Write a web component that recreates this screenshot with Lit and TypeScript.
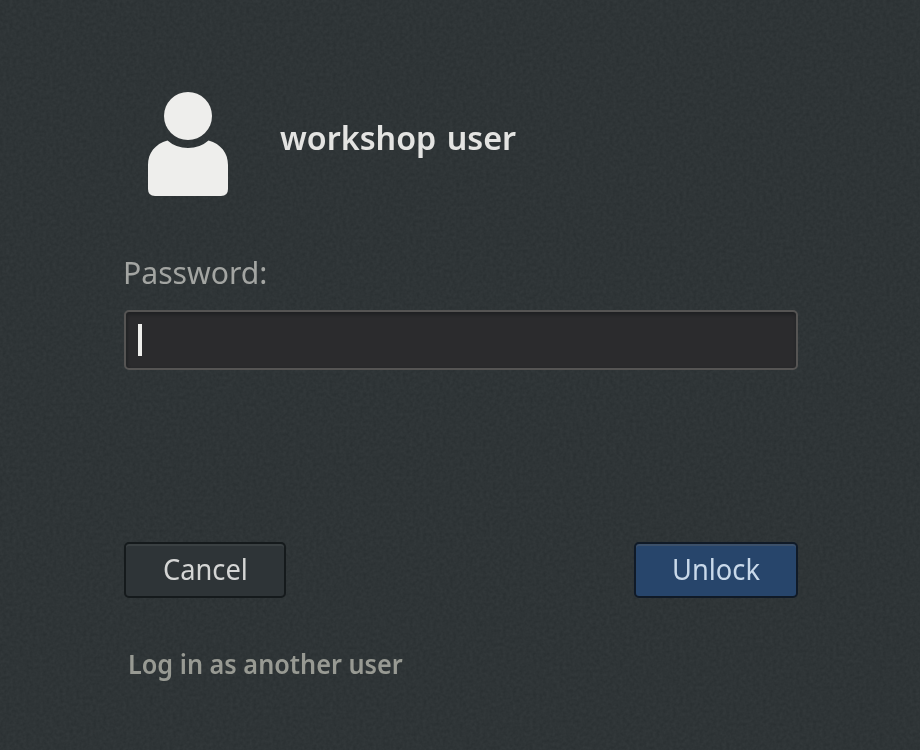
import { LitElement, html, css } from "lit";
import { customElement } from "lit/decorators.js";

@customElement("app-root")
export class AppRoot extends LitElement {
  static styles = css`
    :host {
      display: block;
      position: relative;
      box-sizing: border-box;
      width: 920px;
      height: 750px;
      overflow: hidden;
      background: #2e3436;
      font-family: "Noto Sans", "Open Sans", sans-serif;
    }
    .grain {
      position: absolute;
      inset: 0;
      width: 100%;
      height: 100%;
      pointer-events: none;
    }
    .noise {
      color-interpolation-filters: sRGB;
    }
    .dialog {
      position: relative;
      display: flex;
      flex-direction: column;
      width: 674px;
      margin-left: 124px;
      padding-top: 88px;
    }
    .user {
      display: flex;
      gap: 48px;
      height: 112px;
      padding-left: 20px;
    }
    .avatar {
      width: 88px;
      height: 112px;
      fill: #eeeeec;
      flex: none;
    }
    .name {
      font-size: 32.5px;
      font-weight: 600;
      line-height: 48px;
      margin-top: 26px;
      color: #e4e4e2;
      white-space: nowrap;
      word-spacing: 2px;
    }
    .label {
      font-size: 31.5px;
      line-height: 44px;
      margin-top: 50px;
      margin-left: -1px;
      color: #a3a5a2;
      white-space: nowrap;
    }
    .entry {
      box-sizing: border-box;
      display: flex;
      align-items: center;
      height: 60px;
      margin-top: 16px;
      padding-left: 12px;
      border: 2px solid #555453;
      border-radius: 5px;
      background: #2b2b2d;
      box-shadow: inset 0 3px 3px #212224, inset 2px 0 2px #252628;
    }
    .caret {
      width: 4px;
      height: 32px;
      background: #eeeeec;
    }
    .actions {
      display: flex;
      justify-content: space-between;
      margin-top: 172px;
    }
    button {
      box-sizing: border-box;
      width: 162px;
      height: 56px;
      padding: 0 0 2px;
      border: 2px solid #151a1c;
      border-radius: 5px;
      background: #2e3437;
      box-shadow: inset 0 2px 0 #3a4042;
      color: #d5d6d5;
      font: 28.5px/50px "Noto Sans", "Open Sans", sans-serif;
    }
    .primary {
      width: 164px;
      border-color: #101a27;
      background: #27456b;
      box-shadow: inset 0 2px 0 #3c5069;
      color: #c9d9ea;
    }
    .fit {
      display: inline-block;
      transform: scaleX(0.957);
      transform-origin: 0 50%;
    }
    .name .fit {
      transform: scaleX(0.993);
    }
    .switch .fit {
      transform: scaleX(0.953);
    }
    button .fit {
      transform-origin: 50% 50%;
    }
    .switch {
      margin-top: 46px;
      margin-left: 4px;
      font-size: 26.5px;
      font-weight: 600;
      line-height: 40px;
      color: #989a93;
      white-space: nowrap;
    }
  `;

  render() {
    return html`
      <svg class="grain" aria-hidden="true">
        <filter id="noise" class="noise" x="0" y="0" width="100%" height="100%">
          <feTurbulence type="fractalNoise" baseFrequency="0.3" numOctaves="2" seed="4" />
          <feColorMatrix
            values="0.05 0 0 0 0.158  0.05 0 0 0 0.181  0.05 0 0 0 0.189  0 0 0 0 1"
          />
        </filter>
        <rect width="100%" height="100%" filter="url(#noise)" />
      </svg>
      <div class="dialog">
        <div class="user">
          <svg class="avatar" viewBox="0 0 88 112">
            <circle cx="44" cy="28" r="24" />
            <path
              d="M23.5 52.5 Q32 60 44 60 Q56 60 64.5 52.5 C77 56 84 65 84 77 V101 Q84 108 77 108 H11 Q4 108 4 101 V77 C4 65 11 56 23.5 52.5 Z"
            />
          </svg>
          <div class="name"><span class="fit">workshop user</span></div>
        </div>
        <div class="label"><span class="fit">Password:</span></div>
        <div class="entry"><span class="caret"></span></div>
        <div class="actions">
          <button><span class="fit">Cancel</span></button>
          <button class="primary"><span class="fit">Unlock</span></button>
        </div>
        <div class="switch"><span class="fit">Log in as another user</span></div>
      </div>
    `;
  }
}
